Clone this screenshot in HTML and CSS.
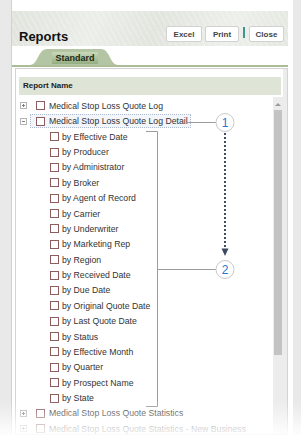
FILE: index.html
```html
<!DOCTYPE html>
<html lang="en">
<head>
    <meta charset="UTF-8">
    <title>Reports</title>
    <link rel="stylesheet" href="styles.css">
</head>
<body>
    <div class="card">
        <div class="head">
            <h1 class="title">Reports</h1>
            <div class="actions">
                <button class="btn btn-excel">Excel</button>
                <button class="btn btn-print">Print</button>
                <span class="sep"></span>
                <button class="btn btn-close">Close</button>
            </div>
        </div>
        <div class="tabs">
            <div class="tab">
                <svg class="tab-shape" width="88" height="16" viewBox="0 0 88 16">
                    <path d="M0 16 C8 16 8 0 17 0 L71 0 C80 0 80 16 88 16 Z" fill="#b3c5a2"/>
                </svg>
                <span class="tab-label">Standard</span>
            </div>
        </div>
        <div class="panel">
            <div class="grid-head">Report Name</div>
            <div class="tree-wrap">
                <ul class="tree">
                    <li class="row">
                        <svg class="exp" width="7" height="7" viewBox="0 0 7 7"><rect x="0.5" y="0.5" width="6" height="6" fill="#fff" stroke="#b4b4b4"/><path d="M2 3.5h3M3.5 2v3" stroke="#808080"/></svg>
                        <span class="node"><span class="cb"></span>Medical Stop Loss Quote Log</span>
                    </li>
                    <li class="row">
                        <svg class="exp" width="7" height="7" viewBox="0 0 7 7"><rect x="0.5" y="0.5" width="6" height="6" fill="#fff" stroke="#b4b4b4"/><path d="M2 3.5h3" stroke="#808080"/></svg>
                        <span class="node selected"><span class="cb"></span>Medical Stop Loss Quote Log Detail</span>
                    </li>
                    <li class="row child"><span class="cb"></span>by Effective Date</li>
                    <li class="row child"><span class="cb"></span>by Producer</li>
                    <li class="row child"><span class="cb"></span>by Administrator</li>
                    <li class="row child"><span class="cb"></span>by Broker</li>
                    <li class="row child"><span class="cb"></span>by Agent of Record</li>
                    <li class="row child"><span class="cb"></span>by Carrier</li>
                    <li class="row child"><span class="cb"></span>by Underwriter</li>
                    <li class="row child"><span class="cb"></span>by Marketing Rep</li>
                    <li class="row child"><span class="cb"></span>by Region</li>
                    <li class="row child"><span class="cb"></span>by Received Date</li>
                    <li class="row child"><span class="cb"></span>by Due Date</li>
                    <li class="row child"><span class="cb"></span>by Original Quote Date</li>
                    <li class="row child"><span class="cb"></span>by Last Quote Date</li>
                    <li class="row child"><span class="cb"></span>by Status</li>
                    <li class="row child"><span class="cb"></span>by Effective Month</li>
                    <li class="row child"><span class="cb"></span>by Quarter</li>
                    <li class="row child"><span class="cb"></span>by Prospect Name</li>
                    <li class="row child"><span class="cb"></span>by State</li>
                    <li class="row">
                        <svg class="exp" width="7" height="7" viewBox="0 0 7 7"><rect x="0.5" y="0.5" width="6" height="6" fill="#fff" stroke="#b4b4b4"/><path d="M2 3.5h3M3.5 2v3" stroke="#808080"/></svg>
                        <span class="node"><span class="cb"></span>Medical Stop Loss Quote Statistics</span>
                    </li>
                    <li class="row">
                        <svg class="exp" width="7" height="7" viewBox="0 0 7 7"><rect x="0.5" y="0.5" width="6" height="6" fill="#fff" stroke="#b4b4b4"/><path d="M2 3.5h3M3.5 2v3" stroke="#808080"/></svg>
                        <span class="node"><span class="cb"></span>Medical Stop Loss Quote Statistics - New Business</span>
                    </li>
                </ul>
                <div class="scrollbar">
                    <span class="arrow"></span>
                    <span class="thumb"></span>
                </div>
            </div>
        </div>
    </div>

    <!-- callout annotations drawn over the tree -->
    <svg class="callouts" width="301" height="435" viewBox="0 0 301 435">
        <path d="M146 131.5H157.5V406.5H146" fill="none" stroke="#9c9c9c"/>
        <path d="M186 122.5H216" stroke="#9c9c9c"/>
        <path d="M157.5 269.5H216" stroke="#9c9c9c"/>
        <path d="M225 133V249" stroke="#3d4b60" stroke-width="2" stroke-dasharray="2 2"/>
        <path d="M221.5 248.5H228.5L225 256Z" fill="#3d4b60"/>
        <circle cx="225" cy="122.5" r="9" fill="#fff" stroke="#c9c9c9"/>
        <circle cx="225" cy="269.5" r="9" fill="#fff" stroke="#c9c9c9"/>
        <text x="225" y="127" class="num">1</text>
        <text x="225" y="274" class="num">2</text>
    </svg>

    <div class="fade"></div>
</body>
</html>
```

FILE: styles.css
```css
body {
    margin: 0;
    height: 100vh;
    overflow: hidden;
    position: relative;
    background: #e9e9e9;
    font-family: "Liberation Sans", Arial, sans-serif;
}
.card {
    margin-left: 11px;
    width: 282px;
    height: 100vh;
    box-sizing: border-box;
    padding: 11px 5px 0 0;
    background: #fff;
    border-left: 1px solid #d2d2d2;
    display: flex;
    flex-direction: column;
}
.head {
    height: 35px;
    flex: none;
    display: flex;
    align-items: flex-end;
    justify-content: space-between;
    padding: 0 4px 4px 7px;
    box-sizing: border-box;
    background:
        repeating-linear-gradient(62deg, rgba(255, 255, 255, 0.28) 0 1px, transparent 1px 5px),
        linear-gradient(110deg, #e1e4dd 0%, #eceee9 30%, #e2e5de 52%, #edefea 78%, #e5e8e1 100%);
}
.title {
    margin: 0 0 -1px;
    font-size: 13px;
    line-height: 13px;
    font-weight: 700;
    color: #111;
}
.actions {
    display: flex;
    align-items: center;
    gap: 3px;
}
.btn {
    height: 16px;
    padding: 0;
    border: 1px solid #d2d2d2;
    border-radius: 2px;
    background: #fff;
    font-family: "Liberation Sans", Arial, sans-serif;
    font-size: 8px;
    font-weight: 700;
    color: #444;
}
.btn-excel { width: 36px; }
.btn-print { width: 34px; }
.btn-close { width: 35px; }
.sep {
    width: 2px;
    height: 11px;
    margin: 0 1px 4px;
    background: #3f9494;
}
.tabs {
    height: 19px;
    flex: none;
    display: flex;
    align-items: flex-end;
    padding-left: 18px;
    border-bottom: 2px solid #aabd97;
}
.tab {
    display: grid;
    width: 88px;
    height: 16px;
}
.tab-shape, .tab-label {
    grid-area: 1 / 1;
}
.tab-label {
    justify-self: start;
    align-self: start;
    margin: 3px 0 0 22px;
    width: 46px;
    height: 12px;
    line-height: 12px;
    text-align: center;
    font-size: 9px;
    font-weight: 700;
    color: #1d2a14;
    background: linear-gradient(#cad8bc, #94ad80);
}
.panel {
    flex: 1;
    min-height: 0;
    margin: 1px 0 0 3px;
    padding: 8px 4px 0 3px;
    border: 1px solid #d3d3d3;
    box-shadow: inset -4px 0 0 #ececec;
    display: flex;
    flex-direction: column;
}
.grid-head {
    height: 18px;
    flex: none;
    margin-right: 2px;
    padding-left: 4px;
    line-height: 18px;
    font-size: 8px;
    font-weight: 700;
    color: #222;
    background: #dfe5d6;
}
.tree-wrap {
    flex: 1;
    display: flex;
    margin-top: 2px;
    min-height: 0;
}
.tree {
    flex: 1;
    list-style: none;
    margin: 0;
    padding: 1.3px 0 0;
    font-size: 8.7px;
    color: #333;
}
.row {
    height: 15.38px;
    display: flex;
    align-items: center;
    white-space: nowrap;
}
.exp {
    flex: none;
    margin-left: 1px;
}
.node {
    display: flex;
    align-items: center;
    gap: 4px;
    height: 12px;
    margin-left: 3px;
    padding: 0 2px 0 5px;
    border: 1px dotted transparent;
}
.node.selected {
    border-color: #aebbd0;
    background: #f2f5fa;
}
.cb {
    flex: none;
    width: 9px;
    height: 9px;
    box-sizing: border-box;
    border: 1px solid #8d5c5e;
    background: #fff;
}
.child {
    padding-left: 31px;
    gap: 3px;
}
.scrollbar {
    width: 10px;
    flex: none;
    display: flex;
    flex-direction: column;
    align-items: center;
    background: #ececec;
}
.arrow {
    margin: 6px 0 4px;
    width: 0;
    height: 0;
    border-left: 3px solid transparent;
    border-right: 3px solid transparent;
    border-bottom: 3px solid #9a9a9a;
}
.thumb {
    width: 8px;
    height: 245px;
    background: #c3c3c3;
}
.callouts {
    position: absolute;
    left: 0;
    top: 0;
    pointer-events: none;
}
.num {
    font-family: "Liberation Sans", Arial, sans-serif;
    font-size: 12px;
    fill: #2779d2;
    text-anchor: middle;
}
.fade {
    position: absolute;
    left: 0;
    right: 0;
    bottom: 0;
    height: 35px;
    background: linear-gradient(rgba(255, 255, 255, 0) 0%, rgba(255, 255, 255, 0.3) 37%, rgba(255, 255, 255, 0.8) 83%, rgba(255, 255, 255, 0.9) 100%);
    pointer-events: none;
}
```
